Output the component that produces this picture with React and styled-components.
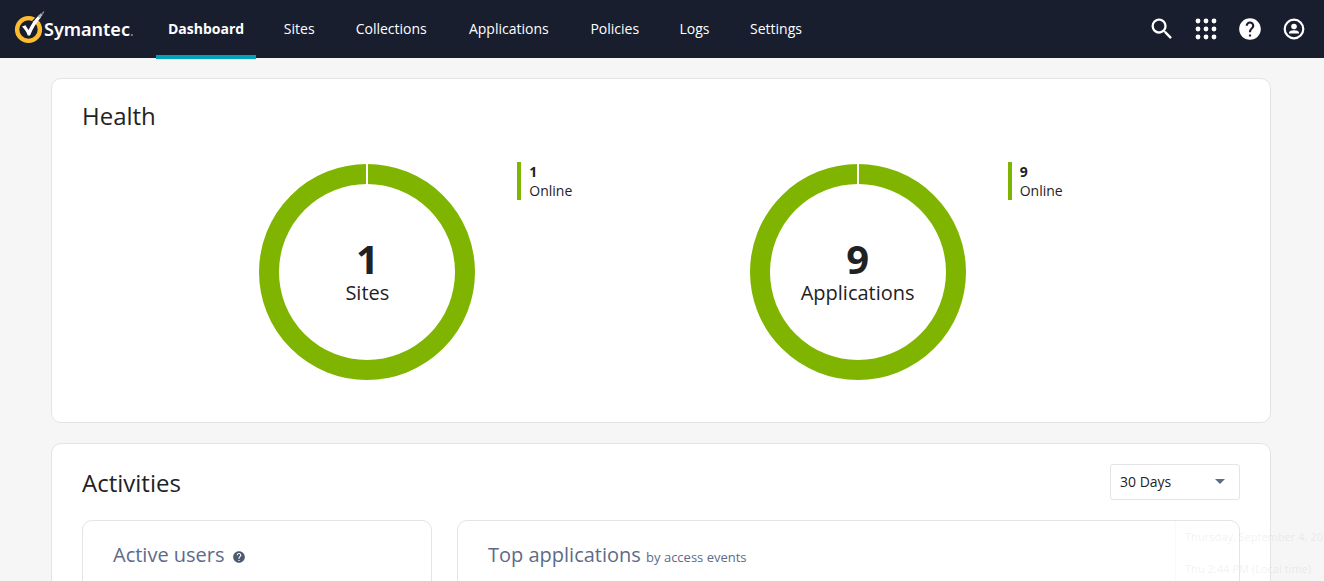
import React, { useState } from 'react'
import styled, { createGlobalStyle } from 'styled-components'
import { MdSearch, MdHelp, MdArrowDropDown } from 'react-icons/md'

const navItems = ['Dashboard', 'Sites', 'Collections', 'Applications', 'Policies', 'Logs', 'Settings']

const health = [
  { label: 'Sites', total: 1, online: 1 },
  { label: 'Applications', total: 9, online: 9 },
]

function Logo() {
  return (
    <LogoLink href="#home" aria-label="Symantec">
      <svg width="32" height="34" viewBox="0 0 32 34" aria-hidden="true">
        <circle cx="14.5" cy="19.5" r="11.4" fill="none" stroke="#fdbb30" strokeWidth="4.4" />
        <path d="M19.5 10.5 L26 3.5 L30 1 L29 4 L24.5 9.5 Z" fill="#191e2f" stroke="#191e2f" strokeWidth="1.4" />
        <path d="M8 16.6 L11.4 15.2 L14.5 20 C17 14.6 20.5 9.6 24.6 5.4 L27 7.2 C22.6 12.6 19 18 16 25.4 L13.8 25.4 C12.5 22 10.5 19 8 16.6 Z" fill="#fff" />
        <path d="M23.6 6.4 L26.8 3.2 L28.8 4.8 L26 8.2 Z" fill="#aeb1b8" />
        <path d="M27.2 3.2 L30.4 0.8 L29.4 4 Z" fill="#a08f6a" />
      </svg>
      <LogoName>Symantec</LogoName>
      <LogoMark>.</LogoMark>
    </LogoLink>
  )
}

function AppsIcon() {
  const steps = [3, 11, 19]
  return (
    <svg width="22" height="22" viewBox="0 0 22 22" fill="currentColor" aria-hidden="true">
      {steps.map((y) => steps.map((x) => <circle key={`${x}-${y}`} cx={x} cy={y} r="2.4" />))}
    </svg>
  )
}

function AccountIcon() {
  return (
    <svg width="22" height="22" viewBox="0 0 22 22" aria-hidden="true">
      <circle cx="11" cy="11" r="9.3" fill="none" stroke="currentColor" strokeWidth="2.2" />
      <circle cx="11" cy="8.5" r="2.8" fill="currentColor" />
      <path d="M6 15.6 V14.8 C6 13 9 12.3 11 12.3 S16 13 16 14.8 V15.6 Z" fill="currentColor" />
    </svg>
  )
}

function Donut({ total, label }) {
  return (
    <DonutBox>
      <svg width="216" height="216" viewBox="0 0 216 216" aria-hidden="true">
        <circle cx="108" cy="108" r="98" fill="none" stroke="#7fb500" strokeWidth="20" />
        <rect x="107" y="0" width="2" height="21" fill="#fff" />
      </svg>
      <DonutText>
        <Total>{total}</Total>
        <TotalLabel>{label}</TotalLabel>
      </DonutText>
    </DonutBox>
  )
}

export default function App() {
  const [active, setActive] = useState('Dashboard')
  const [range, setRange] = useState('30')

  return (
    <Page>
      <GlobalStyle />
      <Header>
        <Logo />
        <Nav>
          {navItems.map((item) => (
            <NavLink
              key={item}
              href={`#${item.toLowerCase()}`}
              title={item}
              $active={item === active}
              onClick={() => setActive(item)}
            >
              {item}
            </NavLink>
          ))}
        </Nav>
        <Tools>
          <IconButton aria-label="Search"><MdSearch size={28} /></IconButton>
          <IconButton aria-label="Apps"><AppsIcon /></IconButton>
          <IconButton aria-label="Help"><MdHelp size={26} /></IconButton>
          <IconButton aria-label="Account"><AccountIcon /></IconButton>
        </Tools>
      </Header>

      <Main>
        <Card>
          <Title>Health</Title>
          <HealthRow>
            {health.map((h) => (
              <HealthItem key={h.label}>
                <Donut total={h.total} label={h.label} />
                <Legend>
                  <strong>{h.online}</strong>
                  <span>Online</span>
                </Legend>
              </HealthItem>
            ))}
          </HealthRow>
        </Card>

        <Card>
          <CardHead>
            <Title>Activities</Title>
            <SelectBox>
              <select aria-label="Time range" value={range} onChange={(e) => setRange(e.target.value)}>
                <option value="7">7 Days</option>
                <option value="30">30 Days</option>
              </select>
              <MdArrowDropDown size={24} />
            </SelectBox>
          </CardHead>
          <Panels>
            <Panel>
              <PanelTitle>Active users</PanelTitle>
              <HintButton aria-label="About active users"><MdHelp size={14} /></HintButton>
            </Panel>
            <Panel>
              <PanelTitle>Top applications <small>by access events</small></PanelTitle>
            </Panel>
          </Panels>
        </Card>
      </Main>

      {/* clock popup, almost faded out */}
      <ClockTip>
        <span>Thursday, September 4, 2025</span>
        <span>Thu 2:44 PM (Local time)</span>
      </ClockTip>
    </Page>
  )
}

const GlobalStyle = createGlobalStyle`
* {
  box-sizing: border-box;
}
body {
  margin: 0;
  background: #f6f6f6;
  color: #1f2225;
  font-family: "Open Sans", "Noto Sans", sans-serif;
  font-size: 14px;
}
button, select {
  font: inherit;
  color: inherit;
}
`

const Page = styled.div`
  height: 100vh;
  overflow: hidden;
`

const Header = styled.header`
  display: flex;
  align-items: center;
  height: 58px;
  padding: 0 16px 0 14px;
  background: #191e2f;
  color: #fff;
`

const LogoLink = styled.a`
  display: flex;
  align-items: center;
  width: 142px;
  height: 40px;
  padding-bottom: 4px;
  color: #fff;
  text-decoration: none;
`

const LogoName = styled.span`
  margin-left: -2px;
  padding-top: 4px;
  font-family: "Noto Sans", sans-serif;
  font-size: 18px;
  font-weight: 600;
  line-height: 24px;
`

const LogoMark = styled.span`
  padding-top: 6px;
  color: #9a9da6;
`

const Nav = styled.nav`
  display: flex;
  flex: 1;
  gap: 15px;
`

// the ::after holds a heavier width, so links barely move when selected
const NavLink = styled.a`
  display: flex;
  flex-direction: column;
  align-items: center;
  height: 59px;
  margin-bottom: -1px;
  padding: 19px 12px 0;
  border-bottom: 4px solid ${(p) => (p.$active ? '#00a3b9' : 'transparent')};
  color: #fff;
  font-weight: ${(p) => (p.$active ? 700 : 500)};
  line-height: 20px;
  text-decoration: none;

  &::after {
    content: attr(title);
    height: 0;
    overflow: hidden;
    visibility: hidden;
    font-weight: 600;
  }
`

const Tools = styled.div`
  display: flex;
  gap: 16px;
`

const IconButton = styled.button`
  display: flex;
  align-items: center;
  justify-content: center;
  width: 28px;
  height: 28px;
  padding: 0;
  border: none;
  background: transparent;
  cursor: pointer;

  svg {
    flex-shrink: 0;
  }
`

const Main = styled.main`
  display: flex;
  flex-direction: column;
  gap: 20px;
  padding: 20px 53px 20px 51px;
`

const Card = styled.section`
  padding: 20px 30px 42px;
  border: 1px solid #e4e4e4;
  border-radius: 10px;
  background: #fff;
`

const CardHead = styled.div`
  display: flex;
  align-items: flex-end;
  justify-content: space-between;
`

const Title = styled.h2`
  margin: 0;
  font-size: 24px;
  font-weight: 400;
  line-height: 34px;
`

const HealthRow = styled.div`
  display: flex;
  justify-content: space-evenly;
  padding-top: 29px;
`

const HealthItem = styled.div`
  display: flex;
  align-items: flex-start;
  gap: 42px;
`

const DonutBox = styled.div`
  display: grid;
  place-items: center;
  padding-top: 2px;

  > * {
    grid-area: 1 / 1;
  }
`

const DonutText = styled.div`
  display: flex;
  flex-direction: column;
  align-items: center;
  padding-top: 2px;
`

const Total = styled.span`
  font-size: 40px;
  font-weight: 700;
  line-height: 40px;
`

const TotalLabel = styled.span`
  font-size: 20px;
  line-height: 28px;
`

const Legend = styled.div`
  display: flex;
  flex-direction: column;
  padding-left: 8px;
  border-left: 4px solid #7fb500;
  line-height: 19px;
`

const SelectBox = styled.div`
  display: grid;
  align-items: center;
  width: 130px;
  height: 36px;

  > * {
    grid-area: 1 / 1;
  }

  select {
    width: 100%;
    height: 100%;
    padding: 0 9px 2px;
    border: 1px solid #e4e4e4;
    border-radius: 3px;
    background: #fff;
    appearance: none;
  }

  svg {
    justify-self: end;
    margin: 0 8px 2px 0;
    color: #5d6b89;
    pointer-events: none;
  }
`

const Panels = styled.div`
  display: grid;
  grid-template-columns: 350px 1fr;
  gap: 25px;
  padding-top: 20px;
`

const Panel = styled.article`
  display: flex;
  align-items: flex-start;
  min-height: 240px;
  padding: 20px 30px;
  border: 1px solid #e4e4e4;
  border-radius: 10px;
`

const PanelTitle = styled.h3`
  margin: 0;
  color: #5d6b89;
  font-size: 20px;
  font-weight: 400;
  line-height: 28px;

  small {
    font-size: 13px;
  }
`

const HintButton = styled.button`
  display: flex;
  margin: 9px 0 0 7px;
  padding: 0;
  border: none;
  background: transparent;
  color: #4d5b70;
  cursor: pointer;
`

const ClockTip = styled.div`
  position: fixed;
  right: 0;
  bottom: 0;
  display: flex;
  flex-direction: column;
  gap: 12px;
  width: 149px;
  padding: 8px 0 2px 9px;
  overflow: hidden;
  border-left: 1px solid #999;
  background: #fff;
  color: #000;
  font-family: "Noto Sans", sans-serif;
  font-size: 11px;
  line-height: 20px;
  white-space: nowrap;
  opacity: 0.05;
`
